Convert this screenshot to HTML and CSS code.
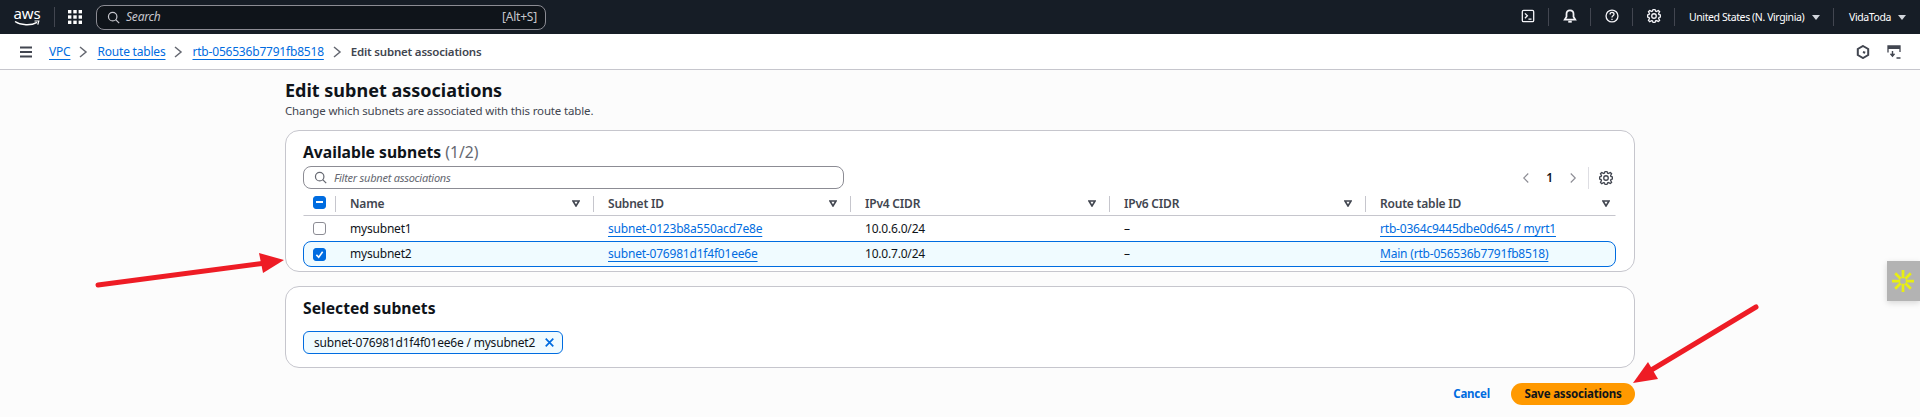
FILE: index.html
```html
<!doctype html>
<html>
	<head>
		<title>Edit subnet associations</title>
		<link rel="stylesheet" href="styles.css">
	</head>
	<body>
		<header class="topNav">
			<div class="logo">
				<span class="logoText">aws</span>
				<svg class="logoSmile" viewBox="0 0 26 7"><path d="M1 1.500c6 4 16 4.500 22 .8" fill="none" stroke="#fff" stroke-width="1.400"/><path d="M20.500 1h4.300l-1 3.600" fill="none" stroke="#fff" stroke-width="1.200"/></svg>
			</div>
			<span class="navSep sepLogo"></span>
			<svg class="gridIcon" viewBox="0 0 14 14" fill="#fff"><rect width="3.400" height="3.400"/><rect x="5.300" width="3.400" height="3.400"/><rect x="10.600" width="3.400" height="3.400"/><rect y="5.300" width="3.400" height="3.400"/><rect x="5.300" y="5.300" width="3.400" height="3.400"/><rect x="10.600" y="5.300" width="3.400" height="3.400"/><rect y="10.600" width="3.400" height="3.400"/><rect x="5.300" y="10.600" width="3.400" height="3.400"/><rect x="10.600" y="10.600" width="3.400" height="3.400"/></svg>
			<div class="navSearch">
				<svg class="icon" viewBox="0 0 16 16"><circle cx="7" cy="7" r="5.200"/><path d="M10.700 10.700L15 15"/></svg>
				<span class="navSearchText">Search</span>
				<span class="navShortcut">[Alt+S]</span>
			</div>
			<div class="navRight">
				<a class="navBtn"><svg class="icon" viewBox="0 0 16 16"><rect x="1.500" y="1.500" width="13" height="13" rx="1.500"/><path d="M4.500 5l2.800 2.800-2.800 2.800M8.500 11.500h3.500"/></svg></a>
				<a class="navBtn"><svg class="icon" viewBox="0 0 16 16"><path d="M8 1.500c-2.700 0-4 2-4 4.200v3.100L2 12h12l-2-3.200V5.700c0-2.200-1.300-4.200-4-4.200z" stroke-width="2"/><path d="M6 14.500h4" stroke-width="2.200"/></svg></a>
				<a class="navBtn"><svg class="icon" viewBox="0 0 16 16"><circle cx="8" cy="8" r="6.800"/><path d="M5.800 6.200c0-3 4.500-3 4.500-.2 0 1.800-2.300 1.800-2.300 3.700M8 11v1.500"/></svg></a>
				<a class="navBtn"><svg class="icon" viewBox="0 0 16 16"><path d="M13.300 5.200l1.100-2.100L13 1.700l-2.100 1.100c-.3-.2-.7-.3-1.100-.4L9 .5H7l-.8 1.900c-.3.1-.7.2-1 .4L3.100 1.700 1.700 3.100l1.100 2.100c-.2.3-.3.7-.4 1L.5 7v2l1.900.8c.1.4.3.7.4 1.100l-1.100 2.100 1.400 1.400 2.100-1.100c.3.2.7.3 1.100.4L7 15.500h2l.8-1.900c.4-.1.700-.3 1.100-.4l2.100 1.100 1.400-1.400-1.100-2.100c.2-.3.3-.7.4-1.100l1.800-.7V7l-1.900-.8c-.1-.3-.2-.7-.3-1z"/><circle cx="8" cy="8" r="2.600"/></svg></a>
				<a class="navMenu region">United States (N. Virginia) <i class="caret"></i></a>
				<a class="navMenu account">VidaToda <i class="caret"></i></a>
			</div>
		</header>

		<div class="crumbBar">
			<svg class="icon menuIcon" viewBox="0 0 12 12"><path d="M0 1.500h12M0 6h12M0 10.500h12" stroke-width="1.800"/></svg>
			<a class="link">VPC</a>
			<svg class="icon chev" viewBox="0 0 11 12"><path d="M2 1l6 5-6 5"/></svg>
			<a class="link">Route tables</a>
			<svg class="icon chev" viewBox="0 0 11 12"><path d="M2 1l6 5-6 5"/></svg>
			<a class="link">rtb-056536b7791fb8518</a>
			<svg class="icon chev" viewBox="0 0 11 12"><path d="M2 1l6 5-6 5"/></svg>
			<span class="crumbNow">Edit subnet associations</span>
			<div class="crumbTools">
				<svg class="icon" viewBox="0 0 14 14"><path d="M7 1l5.200 3v6L7 13l-5.200-3V4z" stroke-width="2"/><path d="M7 7l2.200.8" stroke-width="2"/></svg>
				<svg class="icon" viewBox="0 0 14 14"><path d="M1 7.500V1h12v6" stroke-width="1.300"/><path d="M1 2.500h12" stroke-width="3"/><path d="M5.500 6v5M3.500 8.800l2 2.400 2-2.400M9.500 13h4" stroke-width="1.400"/></svg>
			</div>
		</div>

		<main class="content">
			<h1>Edit subnet associations</h1>
			<p class="subTitle">Change which subnets are associated with this route table.</p>

			<section class="panel subnetsPanel">
				<h2>Available subnets <span class="count">(1/2)</span></h2>
				<div class="tools">
					<div class="filter">
						<svg class="icon" viewBox="0 0 16 16"><circle cx="7" cy="7" r="5.200"/><path d="M10.700 10.700L15 15"/></svg>
						<span>Filter subnet associations</span>
					</div>
					<div class="pager">
						<svg class="icon pagerChev" viewBox="0 0 16 16"><path d="M11 2L5 8l6 6"/></svg>
						<b>1</b>
						<svg class="icon pagerChev" viewBox="0 0 16 16"><path d="M5 2l6 6-6 6"/></svg>
						<i class="pagerSep"></i>
						<svg class="icon pagerGear" viewBox="0 0 16 16"><path d="M13.300 5.200l1.100-2.100L13 1.700l-2.100 1.100c-.3-.2-.7-.3-1.100-.4L9 .5H7l-.8 1.900c-.3.1-.7.2-1 .4L3.100 1.700 1.700 3.100l1.100 2.100c-.2.3-.3.7-.4 1L.5 7v2l1.900.8c.1.4.3.7.4 1.100l-1.100 2.100 1.400 1.400 2.100-1.100c.3.2.7.3 1.100.4L7 15.500h2l.8-1.900c.4-.1.700-.3 1.100-.4l2.100 1.100 1.400-1.400-1.100-2.100c.2-.3.3-.7.4-1.100l1.800-.7V7l-1.900-.8c-.1-.3-.2-.7-.3-1z"/><circle cx="8" cy="8" r="2.600"/></svg>
					</div>
				</div>

				<div class="row headRow">
					<div class="cell checkCell"><span class="check on"><i class="dash"></i></span></div>
					<div class="cell">Name<svg class="sort" viewBox="0 0 8 7"><path d="M1 1h6L4 6z"/></svg></div>
					<div class="cell">Subnet ID<svg class="sort" viewBox="0 0 8 7"><path d="M1 1h6L4 6z"/></svg></div>
					<div class="cell">IPv4 CIDR<svg class="sort" viewBox="0 0 8 7"><path d="M1 1h6L4 6z"/></svg></div>
					<div class="cell">IPv6 CIDR<svg class="sort" viewBox="0 0 8 7"><path d="M1 1h6L4 6z"/></svg></div>
					<div class="cell">Route table ID<svg class="sort" viewBox="0 0 8 7"><path d="M1 1h6L4 6z"/></svg></div>
				</div>
				<div class="row">
					<div class="cell checkCell"><span class="check"></span></div>
					<div class="cell">mysubnet1</div>
					<div class="cell"><a class="link">subnet-0123b8a550acd7e8e</a></div>
					<div class="cell">10.0.6.0/24</div>
					<div class="cell">–</div>
					<div class="cell"><a class="link">rtb-0364c9445dbe0d645 / myrt1</a></div>
				</div>
				<div class="row selected">
					<div class="cell checkCell"><span class="check on"><svg viewBox="0 0 14 14"><path d="M3 7.500l3 3 5-7" fill="none" stroke="#fff" stroke-width="2"/></svg></span></div>
					<div class="cell">mysubnet2</div>
					<div class="cell"><a class="link">subnet-076981d1f4f01ee6e</a></div>
					<div class="cell">10.0.7.0/24</div>
					<div class="cell">–</div>
					<div class="cell"><a class="link">Main (rtb-056536b7791fb8518)</a></div>
				</div>
			</section>

			<section class="panel selectedPanel">
				<h2>Selected subnets</h2>
				<div class="chip">
					<span>subnet-076981d1f4f01ee6e / mysubnet2</span>
					<svg class="icon" viewBox="0 0 16 16"><path d="M2.500 2.500l11 11M13.500 2.500l-11 11"/></svg>
				</div>
			</section>

			<div class="actions">
				<a class="cancel">Cancel</a>
				<a class="save">Save associations</a>
			</div>
		</main>

		<div class="sideWidget">
			<svg viewBox="0 0 24 24"><g stroke="#e8ee12" stroke-width="3"><path d="M12 0v9M12 15v9M0 12h9M15 12h9M3.500 3.500l6 6M14.500 14.500l6 6M20.500 3.500l-6 6M9.500 14.500l-6 6"/></g></svg>
		</div>

		<svg class="arrows" viewBox="0 0 1920 417">
			<path d="M98 285L266 263" stroke="#ee1c25" stroke-width="5" stroke-linecap="round"/>
			<path d="M259 253L284 260L263 273Z" fill="#ee1c25"/>
			<path d="M1756 307L1648 372" stroke="#ee1c25" stroke-width="5" stroke-linecap="round"/>
			<path d="M1648 362L1633 383L1658 379Z" fill="#ee1c25"/>
		</svg>
	</body>
</html>
```

FILE: styles.css
```css
* {
	margin: 0px;
	padding: 0px;
	box-sizing: border-box;
}
html, body {
	height: 417px;
	overflow: hidden;
}
body {
	position: relative;
	background: #fcfcfc;
	color: #0f141a;
	font-family: "Noto Sans", "Open Sans", sans-serif;
	font-size: 12px;
	line-height: 16px;
	letter-spacing: -0.2px;
}
.icon {
	width: 16px;
	height: 16px;
	flex: none;
	fill: none;
	stroke: currentColor;
	stroke-width: 1.5;
}
.link {
	color: #006ce0;
	text-decoration: underline;
	text-underline-offset: 3px;
}

/* top bar */
.topNav {
	display: flex;
	align-items: center;
	height: 34px;
	padding-left: 14px;
	background: #161d26;
	color: #fff;
}
.logo {
	width: 26px;
	height: 24px;
	display: flex;
	flex-direction: column;
	align-items: center;
}
.logoText {
	font-size: 15px;
	line-height: 16px;
}
.logoSmile {
	width: 26px;
	height: 7px;
	margin-top: -1px;
}
.navSep {
	width: 1px;
	height: 20px;
	background: #424650;
}
.sepLogo {
	margin-left: 14px;
}
.gridIcon {
	width: 14px;
	height: 14px;
	margin-left: 13px;
}
.navSearch {
	display: flex;
	align-items: center;
	width: 450px;
	height: 25px;
	margin-left: 14px;
	padding: 0 8px 0 10px;
	background: #0f141a;
	border: 1px solid #8c8c94;
	border-radius: 8px;
	color: #c6c6cd;
}
.navSearch .icon {
	width: 13px;
	height: 13px;
}
.navSearchText {
	margin-left: 6px;
	font-style: italic;
}
.navShortcut {
	margin-left: auto;
}
.navRight {
	display: flex;
	align-items: center;
	margin-left: auto;
	height: 100%;
}
.navBtn {
	display: flex;
	justify-content: center;
	width: 42px;
	height: 18px;
	padding-top: 1px;
	border-right: 1px solid #424650;
	color: #f3f3f7;
}
.navBtn .icon {
	width: 14px;
	height: 14px;
}
.navMenu {
	display: flex;
	align-items: center;
	height: 18px;
	font-size: 10.500px;
	letter-spacing: -0.4px;
	white-space: pre;
}
.region {
	width: 159px;
	padding-left: 14px;
	border-right: 1px solid #424650;
}
.account {
	width: 86px;
	padding-left: 15px;
}
.caret {
	width: 0;
	height: 0;
	margin-left: 5px;
	border-left: 4px solid transparent;
	border-right: 4px solid transparent;
	border-top: 5px solid #d1d5db;
}

/* breadcrumbs */
.crumbBar {
	display: flex;
	align-items: center;
	height: 36px;
	padding-left: 20px;
	background: #fff;
	border-bottom: 1px solid #c6c6cd;
	color: #424650;
}
.menuIcon {
	width: 12px;
	height: 12px;
	margin-right: 17px;
}
.chev {
	width: 11px;
	height: 12px;
	margin: 0 8px;
	color: #656871;
}
.crumbNow {
	font-size: 11.500px;
	font-weight: 600;
}
.crumbTools {
	display: flex;
	gap: 17px;
	margin-left: auto;
	padding-right: 19px;
}
.crumbTools .icon {
	width: 14px;
	height: 14px;
}

/* page */
.content {
	width: 1350px;
	margin-left: 285px;
	padding-top: 8px;
}
h1 {
	font-size: 18px;
	line-height: 24px;
	font-weight: 700;
	letter-spacing: 0;
}
.subTitle {
	margin-top: 1px;
	color: #424650;
	font-size: 11.500px;
	line-height: 15px;
	letter-spacing: -0.15px;
}
.panel {
	background: #fff;
	border: 1px solid #c6c6cd;
	border-radius: 14px;
	padding: 0 18px 0 17px;
}
h2 {
	font-size: 15.700px;
	line-height: 20px;
	font-weight: 700;
	letter-spacing: 0;
}
.count {
	color: #656871;
	font-weight: 400;
}
.subnetsPanel {
	height: 142px;
	margin-top: 12px;
	padding-top: 11px;
}
.tools {
	display: flex;
	justify-content: space-between;
	align-items: center;
	margin-top: 4px;
}
.filter {
	display: flex;
	align-items: center;
	gap: 7px;
	width: 541px;
	height: 23px;
	padding-left: 10px;
	border: 1px solid #8c8c94;
	border-radius: 8px;
	color: #656871;
}
.filter .icon {
	width: 13px;
	height: 13px;
}
.filter span {
	font-size: 11px;
	font-style: italic;
	letter-spacing: -0.25px;
}
.pager {
	display: flex;
	align-items: center;
	padding-right: 3px;
	color: #424650;
}
.pager b {
	width: 35px;
	text-align: center;
	color: #0f141a;
	font-weight: 600;
}
.pagerChev {
	width: 12px;
	height: 14px;
	color: #8c8c94;
}
.pagerSep {
	width: 1px;
	height: 22px;
	margin: 0 10px 0 9px;
	background: #dedee3;
}
.pager .pagerGear {
	width: 14px;
	height: 14px;
}

/* table */
.row {
	display: grid;
	grid-template-columns: 31px 258px 257px 259px 256px 250px;
	align-items: center;
	height: 25px;
	border: 1px solid transparent;
}
.headRow {
	height: 24px;
	margin-top: 3px;
	border-width: 0 1px;
	border-bottom: 1px solid #c6c6cd;
	color: #424650;
	font-weight: 600;
}
.headRow .cell {
	position: relative;
	height: 16px;
	padding-left: 14px;
	border-left: 1px solid #c6c6cd;
}
.headRow .checkCell {
	padding-left: 10px;
	border-left: 0;
}
.cell {
	padding-left: 15px;
	white-space: nowrap;
}
.row .checkCell {
	padding-left: 9px;
	line-height: 0;
}
.selected {
	height: 26px;
	background: #f0fbff;
	border-color: #006ce0;
	border-radius: 8px;
}
.check {
	display: inline-block;
	width: 13px;
	height: 13px;
	border: 1px solid #8c8c94;
	border-radius: 3px;
	background: #fff;
}
.check.on {
	border-color: #006ce0;
	background: #006ce0;
}
.check svg {
	display: block;
	width: 11px;
	height: 11px;
}
.dash {
	display: block;
	width: 7px;
	height: 2px;
	margin: 4px 2px;
	background: #fff;
}
.sort {
	position: absolute;
	right: 13px;
	top: 4px;
	width: 8px;
	height: 7px;
	fill: none;
	stroke: #424650;
	stroke-width: 1.600;
}
.headRow .cell:last-child .sort {
	right: 5px;
}

/* selected subnets */
.selectedPanel {
	height: 82px;
	margin-top: 14px;
	padding-top: 11px;
}
.chip {
	display: inline-flex;
	align-items: center;
	gap: 9px;
	height: 23px;
	margin-top: 13px;
	padding: 0 7px 0 10px;
	background: #f0fbff;
	border: 1px solid #006ce0;
	border-radius: 6px;
}
.chip .icon {
	width: 11px;
	height: 11px;
	color: #006ce0;
	stroke-width: 2.500;
}

.actions {
	display: flex;
	justify-content: flex-end;
	align-items: center;
	gap: 21px;
	margin-top: 15px;
	font-weight: 700;
	font-size: 11.500px;
}
.cancel {
	color: #006ce0;
}
.save {
	width: 124px;
	height: 22px;
	line-height: 22px;
	text-align: center;
	background: #ff9900;
	border-radius: 11px;
}

/* things on top of the page */
.sideWidget {
	position: absolute;
	left: 1887px;
	top: 261px;
	width: 33px;
	height: 40px;
	padding: 9px 5px;
	background: #b3b3b3;
	box-shadow: 0 2px 6px rgba(0, 0, 0, 0.15);
}
.sideWidget svg {
	display: block;
	width: 22px;
	height: 22px;
}
.arrows {
	position: absolute;
	left: 0;
	top: 0;
	width: 1920px;
	height: 417px;
	pointer-events: none;
}
```
